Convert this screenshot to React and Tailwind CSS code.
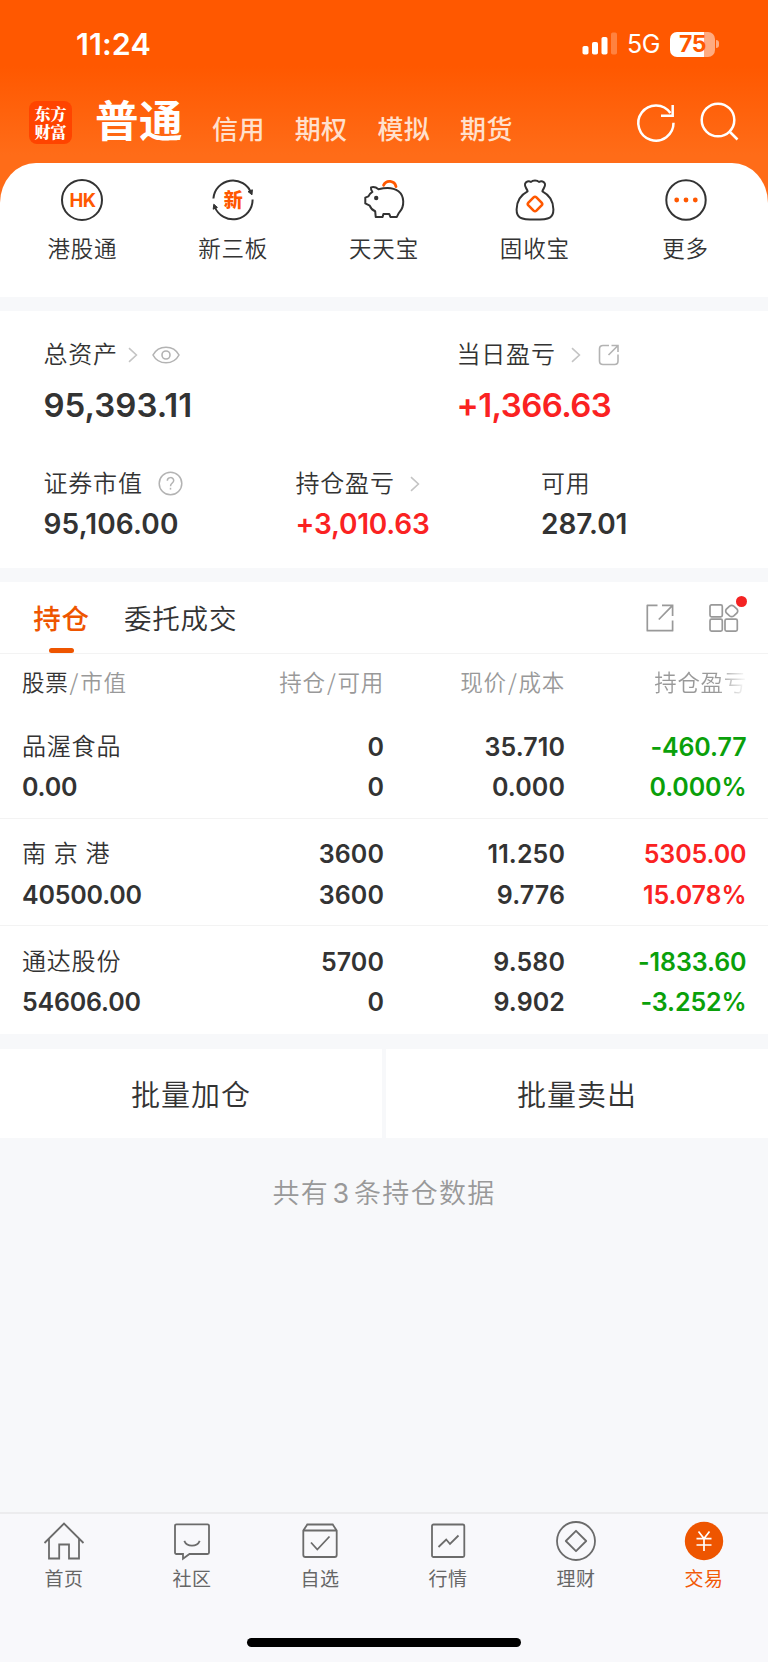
import React from "react";

const accounts = ["信用", "期权", "模拟", "期货"];

const holdings = [
  { name: "品渥食品", value: "0.00", qty: "0", avail: "0", price: "35.710", cost: "0.000", pl: "-460.77", pct: "0.000%", tone: "text-[#0aa00a]" },
  { name: "南 京 港", value: "40500.00", qty: "3600", avail: "3600", price: "11.250", cost: "9.776", pl: "5305.00", pct: "15.078%", tone: "text-[#fa2222]" },
  { name: "通达股份", value: "54606.00", qty: "5700", avail: "0", price: "9.580", cost: "9.902", pl: "-1833.60", pct: "-3.252%", tone: "text-[#0aa00a]" },
];

function StatusBar() {
  return (
    <div className="flex h-[88px] items-center pl-[76px] pr-[49px] text-white">
      <span className="text-[30.5px] font-semibold leading-none tracking-[0.1px]">11:24</span>
      <svg className="ml-auto" width="36" height="24" viewBox="0 0 36 24" fill="#fff">
        <rect x="0.5" y="14" width="6" height="8.5" rx="1.8" />
        <rect x="10" y="10" width="6" height="12.5" rx="1.8" />
        <rect x="19.5" y="5" width="6" height="17.5" rx="1.8" />
        <rect x="29" y="0.5" width="6" height="22" rx="1.8" opacity="0.25" />
      </svg>
      <span className="ml-[9px] w-[34px] text-[25px] font-normal leading-none tracking-[-0.4px]">5G</span>
      <div className="ml-[9px] flex h-[25px] w-[45px] items-center justify-center rounded-[7px] bg-[linear-gradient(90deg,#fff_76%,#ffab80_76%)] text-[23px] font-bold leading-none tracking-[-0.5px] text-[#ff5800]">
        75
      </div>
      <div className="ml-[1px] h-[8px] w-[3px] rounded-r-full bg-[#ffab80]" />
    </div>
  );
}

function Header() {
  return (
    <header className="h-[203px] bg-[linear-gradient(180deg,#ff5800_0px,#ff5800_66px,#ff6c18_155px,#ff6c18_203px)]">
      <StatusBar />
      <div className="flex h-[75px] items-start pl-[29px]">
        <div className="mt-[13px] flex h-[43px] w-[43px] items-center justify-center rounded-[8px] bg-[#ff4400]">
          <span className="w-[33px] break-all text-center font-['Noto_Serif_CJK_SC','Inter','Noto_Sans_CJK_SC',serif] text-[16px] font-black leading-[18px] text-white">东方财富</span>
        </div>
        <span className="ml-[23px] mt-[9px] w-[90px] whitespace-nowrap text-[43.5px] font-bold leading-[48px] tracking-[0.6px] text-white">普通</span>
        <div className="ml-[27px] mt-[25.5px] flex gap-[29px] text-[26px] font-medium leading-[32px] tracking-[0.4px] text-[#ffe0cd]">
          {accounts.map((a) => (
            <span key={a} className="w-[53.7px] whitespace-nowrap">{a}</span>
          ))}
        </div>
        <svg className="ml-auto mt-[12px]" width="44" height="44" viewBox="0 0 44 44" fill="none" stroke="#fff" strokeWidth="2.5">
          <path d="M39.5 22.8A17.6 17.6 0 1 1 36.4 13" />
          <path d="M38.7 5v10.8H27" />
        </svg>
        <svg className="ml-[18.5px] mr-[27.5px] mt-[12px]" width="44" height="44" viewBox="0 0 44 44" fill="none" stroke="#fff" strokeWidth="2.5">
          <circle cx="21" cy="20" r="16.3" />
          <path d="M32.5 31.5L40.5 39.5" />
        </svg>
      </div>
    </header>
  );
}

function HkIcon() {
  return (
    <div className="flex h-[42px] w-[42px] items-center justify-center rounded-full border-2 border-[#333] text-[18.5px] font-bold leading-none tracking-[-0.6px] text-[#ff5800]">
      HK
    </div>
  );
}

function XinIcon() {
  return (
    <div className="relative flex h-[42px] w-[42px] items-center justify-center">
      <svg className="absolute inset-0" width="42" height="42" viewBox="0 0 42 42" fill="none" stroke="#333" strokeWidth="2">
        <path d="M1.4 19.5A19.6 19.6 0 0 1 39.2 14" />
        <path d="M40.6 20.5A19.6 19.6 0 0 1 2.8 28" />
        <path d="M36 12.6l4 3.2.4-5z" fill="#333" strokeWidth="1" />
        <path d="M5.4 28.4l-3.6-3.2-.6 5z" fill="#333" strokeWidth="1" />
      </svg>
      <span className="text-[19px] font-black leading-none text-[#ff5800]">新</span>
    </div>
  );
}

function PigIcon() {
  return (
    <svg width="42" height="42" viewBox="0 0 42 42" fill="none" stroke="#333" strokeWidth="2" strokeLinejoin="round" strokeLinecap="round">
      <path d="M20.6 6.2A6.6 6.6 0 0 1 33 7.6" stroke="#ff5800" strokeWidth="2.8" />
      <path d="M8 8.4C11 7.6 13.5 8.6 15.5 10.2C23 8.2 31 8.8 35.5 12.2C41.5 17 41.8 27 36.5 33.2C35.3 34.6 34.8 36.2 33.8 37.9H27.4L26.2 34.9H20.4L19.6 37.9H12.7L12.2 32.3C9.6 31.3 7.8 29.4 6.7 26.6L2.3 24.4V18.6L5.4 17.4C6.2 15.4 7.6 14 9.4 12.9C8.3 11.6 7.8 10 8 8.4Z" />
      <circle cx="13.2" cy="19" r="1.2" fill="#333" />
    </svg>
  );
}

function BagIcon() {
  return (
    <svg width="42" height="42" viewBox="0 0 42 42" fill="none" stroke="#333" strokeWidth="2" strokeLinejoin="round">
      <path d="M13.6 12.3C6.5 16 2.6 22 2.6 30.5C2.6 38.5 6 40.6 21 40.6C36 40.6 39.4 38.5 39.4 30.5C39.4 22 35.5 16 28.4 12.3C29 9.5 31.6 8 31 5C30.4 2.4 27.2 1.6 25 3C23.4 1 18.6 1 17 3C14.8 1.6 11.6 2.4 11 5C10.4 8 13 9.5 13.6 12.3Z" />
      <path d="M19.6 18.4q1.4-1.3 2.8 0l5.2 5.2q1.3 1.4 0 2.8l-5.2 5.2q-1.4 1.3-2.8 0l-5.2-5.2q-1.3-1.4 0-2.8z" stroke="#ff5800" strokeWidth="2.6" />
    </svg>
  );
}

function MoreIcon() {
  return (
    <svg width="42" height="42" viewBox="0 0 42 42">
      <circle cx="21" cy="21" r="19.7" fill="none" stroke="#333" strokeWidth="2" />
      <g fill="#ff5800">
        <circle cx="11.7" cy="21" r="2.4" />
        <circle cx="21" cy="21" r="2.4" />
        <circle cx="30.3" cy="21" r="2.4" />
      </g>
    </svg>
  );
}

const shortcuts = [
  { label: "港股通", Icon: HkIcon },
  { label: "新三板", Icon: XinIcon },
  { label: "天天宝", Icon: PigIcon },
  { label: "固收宝", Icon: BagIcon },
  { label: "更多", Icon: MoreIcon },
];

function Shortcuts() {
  return (
    <section className="-mt-[40px] grid h-[134px] grid-cols-5 rounded-t-[36px_40px] bg-white px-[7px] pt-[16px]">
      {shortcuts.map(({ label, Icon }) => (
        <div key={label} className="flex flex-col items-center">
          <Icon />
          <span className="mt-[12px] text-[22.5px] leading-[32px] tracking-[0.8px]">{label}</span>
        </div>
      ))}
    </section>
  );
}

function Chevron({ className }) {
  return (
    <svg className={className} width="10" height="16" viewBox="0 0 10 16" fill="none" stroke="#c4c4c4" strokeWidth="1.6">
      <path d="M1 1.2L8.4 8L1 14.8" />
    </svg>
  );
}

function Assets() {
  return (
    <section className="mt-[14px] h-[257px] bg-white pl-[43.5px] pt-[26px]">
      <div className="flex">
        <div className="w-[413px]">
          <div className="flex h-[35px] items-center">
            <span className="text-[24px] tracking-[0.8px]">总资产</span>
            <Chevron className="ml-[10.5px]" />
            <svg className="ml-[13.5px]" width="28" height="20" viewBox="0 0 28 20" fill="none" stroke="#b3b3b3" strokeWidth="1.6">
              <path d="M1 10C6.5 -0.4 21.5 -0.4 27 10C21.5 20.4 6.5 20.4 1 10Z" />
              <circle cx="14" cy="10" r="4" />
            </svg>
          </div>
          <div className="mt-[12.5px] text-[33px] font-semibold leading-[40px]">95,393.11</div>
        </div>
        <div>
          <div className="flex h-[35px] items-center">
            <span className="text-[24px] tracking-[0.8px]">当日盈亏</span>
            <Chevron className="ml-[15.5px]" />
            <svg className="ml-[16.5px] mt-[1px]" width="22" height="22" viewBox="0 0 22 22" fill="none" stroke="#b3b3b3" strokeWidth="1.6">
              <path d="M11 1.5H5Q1.5 1.5 1.5 5V17Q1.5 20.5 5 20.5H16.5Q20 20.5 20 17V10.5" />
              <path d="M13.5 1.5H20V8M20 1.5L10.5 11" />
            </svg>
          </div>
          <div className="mt-[12.5px] text-[33px] font-semibold leading-[40px] tracking-[-0.55px] text-[#fa2222]">+1,366.63</div>
        </div>
      </div>
      <div className="mt-[41.5px] flex">
        <div className="w-[252px]">
          <div className="flex h-[35px] items-center">
            <span className="text-[24px] tracking-[0.8px]">证券市值</span>
            <svg className="ml-[15.5px]" width="25" height="25" viewBox="0 0 25 25" fill="none" stroke="#b3b3b3" strokeWidth="1.5">
              <circle cx="12.5" cy="12.5" r="11.3" />
              <path d="M9.3 9.8C9.3 5.6 15.7 5.6 15.7 9.6C15.7 12 12.5 12.2 12.5 15.2" />
              <path d="M12.5 16.8V18.6" />
            </svg>
          </div>
          <div className="mt-[6px] text-[28px] font-semibold leading-[35px] tracking-[0.15px]">95,106.00</div>
        </div>
        <div className="w-[245.5px]">
          <div className="flex h-[35px] items-center">
            <span className="text-[24px] tracking-[0.8px]">持仓盈亏</span>
            <Chevron className="ml-[15.5px]" />
          </div>
          <div className="mt-[6px] text-[28px] font-semibold leading-[35px] tracking-[-0.2px] text-[#fa2222]">+3,010.63</div>
        </div>
        <div>
          <div className="flex h-[35px] items-center text-[24px] tracking-[0.8px]">可用</div>
          <div className="mt-[6px] text-[28px] font-semibold leading-[35px]">287.01</div>
        </div>
      </div>
    </section>
  );
}

function Cell({ top, bottom, className = "tracking-[0.1px]" }) {
  return (
    <div className={"text-right text-[25px] font-semibold leading-[40.5px] " + className}>
      <div>{top}</div>
      <div>{bottom}</div>
    </div>
  );
}

function Slash() {
  return <span className="mx-[1.2px] font-['Noto_Sans_CJK_SC']">/</span>;
}

function Positions() {
  return (
    <section className="mt-[14px] h-[452px] bg-white">
      <div className="flex h-[72px] items-start border-b border-[#f3f3f3] pl-[33px] pr-[29.5px]">
        <div className="flex h-[71px] w-[57px] flex-col items-center">
          <span className="mt-[17px] whitespace-nowrap text-[27.5px] font-medium leading-[40px] tracking-[0.8px] text-[#ee5500]">持仓</span>
          <span className="mt-auto h-[5px] w-[25px] rounded-full bg-[#ee5500]" />
        </div>
        <span className="ml-[34px] mt-[17px] text-[27.5px] leading-[40px] tracking-[0.8px]">委托成交</span>
        <svg className="ml-auto mt-[22px]" width="28" height="28" viewBox="0 0 28 28" fill="none" stroke="#999" strokeWidth="1.7">
          <path d="M11.5 1.3H1.3V26.7H26.6V16.5" strokeLinejoin="round" />
          <path d="M16 1.3H26.6V12M26.6 1.3L12.8 15.5" />
        </svg>
        <div className="relative ml-[35px] mt-[22px]">
          <svg width="30" height="28" viewBox="0 0 30 28" fill="none" stroke="#999" strokeWidth="1.7">
            <rect x="1" y="0.9" width="12.3" height="11.9" rx="1.5" />
            <rect x="1" y="15.2" width="12.3" height="11.9" rx="1.5" />
            <rect x="16" y="15.2" width="12.3" height="11.9" rx="1.5" />
            <path d="M20.6 2.1q2.1-1.6 4.2 0l3.2 3q1.4 1.9 0 3.8l-3.2 3q-2.1 1.6-4.2 0l-3.2-3q-1.4-1.9 0-3.8z" />
          </svg>
          <span className="absolute -top-[8px] left-[27.5px] h-[11px] w-[11px] rounded-full bg-[#f42323]" />
        </div>
      </div>
      <div className="grid h-[57px] grid-cols-[200px_162px_181px_182px] items-center pl-[22px] text-right text-[22.5px] tracking-[0.7px] text-[#999]">
        <div className="text-left"><span className="text-[#333]">股票</span><Slash />市值</div>
        <div>持仓<Slash />可用</div>
        <div>现价<Slash />成本</div>
        <div><span className="bg-[linear-gradient(90deg,#999_68%,#fff_100%)] bg-clip-text text-transparent">持仓盈亏</span></div>
      </div>
      {holdings.map((h, i) => (
        <div key={h.name} className={"grid grid-cols-[200px_162px_181px_181.5px] pl-[22px] pt-[15.5px] " + (i < 2 ? "h-[107.7px] border-b border-[#f3f3f3]" : "h-[107px]")}>
          <div className="text-[24px] leading-[40.5px] tracking-[0.8px]">
            <div className={i === 1 ? "tracking-[0.5px]" : ""}>{h.name}</div>
            <div className="text-[25px] font-semibold tracking-[-0.2px]">{h.value}</div>
          </div>
          <Cell top={h.qty} bottom={h.avail} />
          <Cell top={h.price} bottom={h.cost} />
          <Cell top={h.pl} bottom={h.pct} className={"tracking-[-0.1px] " + h.tone} />
        </div>
      ))}
    </section>
  );
}

function NavSvg({ children }) {
  return (
    <svg width="42" height="42" viewBox="0 0 42 42" fill="none" stroke="#6b6b6b" strokeWidth="1.8">
      {children}
    </svg>
  );
}

const tabs = [
  { label: "首页", icon: <NavSvg><path d="M1.5 23L21 3.5L40.5 23M6 19V38.5H16.2V24.5H26V38.5H36V19" /></NavSvg> },
  { label: "社区", icon: <NavSvg><path d="M5.5 4.3H36.5Q38 4.3 38 5.8V32.5Q38 34 36.5 34H18.5L12 38.7V34H5.5Q4 34 4 32.5V5.8Q4 4.3 5.5 4.3Z" /><path d="M13.3 20.8C16 27.3 26 27.3 28.7 20.8" /></NavSvg> },
  { label: "自选", icon: <NavSvg><path d="M4.3 10.5L8.3 4.5H33.7L37.7 10.5V35Q37.7 37 35.7 37H6.3Q4.3 37 4.3 35ZM4.3 10.5H37.7" /><path d="M12 22.5L18.3 29.5L30.5 16.5" /></NavSvg> },
  { label: "行情", icon: <NavSvg><rect x="5" y="4.5" width="32.3" height="32.5" rx="1.5" /><path d="M11.5 27L19.2 19.5L23 24L31.5 15.5" /></NavSvg> },
  { label: "理财", icon: <NavSvg><circle cx="21" cy="21" r="19" /><path d="M21 10.8L31.2 21L21 31.2L10.8 21Z" strokeLinejoin="round" /></NavSvg> },
  {
    label: "交易",
    active: true,
    icon: (
      <svg width="42" height="42" viewBox="0 0 42 42" fill="none" stroke="#fff" strokeWidth="1.7">
        <circle cx="21" cy="21" r="19.2" fill="#ee5500" stroke="none" />
        <path d="M15.5 11.5L21 18.5L26.5 11.5M21 18.5V31M13.5 18.7H28.5M13.5 25H28.5" />
      </svg>
    ),
  },
];

function TabBar() {
  return (
    <nav className="mt-auto flex h-[150px] flex-col items-center border-t-2 border-[#ececee] bg-[#f8f8fb]">
      <div className="grid w-full grid-cols-6 pt-[6px]">
        {tabs.map((t) => (
          <div key={t.label} className={"flex flex-col items-center " + (t.active ? "text-[#f25a08]" : "text-[#666]")}>
            {t.icon}
            <span className="mt-[5px] text-[19px] font-normal leading-[26px] tracking-[0.5px]">{t.label}</span>
          </div>
        ))}
      </div>
      <div className="mt-[45px] h-[9px] w-[274px] rounded-full bg-black" />
    </nav>
  );
}

export default function App() {
  return (
    <div className="flex h-[1662px] w-[768px] flex-col bg-[#f7f8fa] font-['Inter','Noto_Sans_CJK_SC',sans-serif] font-[350] text-[#333]">
      <Header />
      <Shortcuts />
      <Assets />
      <Positions />
      <div className="mt-[15px] grid h-[89px] grid-cols-2 gap-[4px] text-[29px] tracking-[1px]">
        <button className="bg-white pt-[4px]">批量加仓</button>
        <button className="bg-white pt-[4px]">批量卖出</button>
      </div>
      <p className="mt-[35.5px] text-center text-[27px] leading-[40px] tracking-[1.3px] text-[#999]">
        共有<span className="mx-[3.5px] font-normal">3</span>条持仓数据
      </p>
      <TabBar />
    </div>
  );
}
